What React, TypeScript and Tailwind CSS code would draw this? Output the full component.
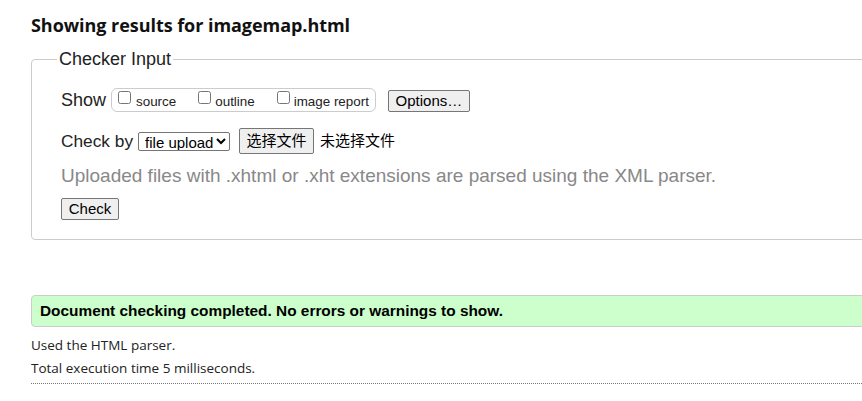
export default function App() {
  return (
    <div className="w-[862px] h-[401px] overflow-hidden bg-white text-[#222]">
      <div className="w-[900px] pl-[31px]">
        {/* heading */}
        <h2 className="mt-[13px] text-[18px] leading-[24px] font-bold text-[#111] font-['Open_Sans',sans-serif] tracking-[-0.05px]">
          Showing results for imagemap.html
        </h2>

        {/* checker form */}
        <fieldset className="mt-[12px] border border-[#cccccc] rounded-[4px] pl-[29px] pb-[18px] font-['Liberation_Sans',Arial,sans-serif]">
          <legend className="-ml-[4px] px-[2px] text-[18px] leading-[20px] text-[#222]">Checker Input</legend>

          <div className="mt-[19px] flex items-center h-[24px]">
            <span className="text-[18px] leading-[20px]">Show</span>
            <div className="ml-[5px] h-[24px] flex items-center border border-[#cccccc] rounded-[6px] pl-[6px] pr-[6px] text-[13.4px]">
              <label className="flex items-center gap-[5px]">
                <input type="checkbox" className="m-0 w-[13px] h-[13px] -translate-y-[2px]" />
                <span className="translate-y-[2px]">source</span>
              </label>
              <label className="ml-[22px] flex items-center gap-[4px]">
                <input type="checkbox" className="m-0 w-[13px] h-[13px] -translate-y-[2px]" />
                <span className="translate-y-[2px]">outline</span>
              </label>
              <label className="ml-[22px] flex items-center gap-[4px]">
                <input type="checkbox" className="m-0 w-[13px] h-[13px] -translate-y-[2px]" />
                <span className="translate-y-[2px]">image report</span>
              </label>
            </div>
            <button className="ml-[12px] mt-[2px] h-[22px] w-[82px] bg-[#efefef] border border-[#767676] rounded-[2px] text-[15px] leading-[18px] text-black">
              Options…
            </button>
          </div>

          <div className="mt-[16px] flex items-center h-[26px]">
            <span className="text-[17.3px] leading-[20px]">Check by</span>
            <select className="ml-[5px] h-[19px] w-[92px] bg-white border border-[#767676] rounded-[2px] text-[15px] leading-[17px] text-black pl-[2px]">
              <option>file upload</option>
            </select>
            <button className="ml-[9px] h-[26px] w-[75px] bg-[#efefef] border border-[#767676] rounded-[2px] text-[15px] text-black font-['Liberation_Sans','Noto_Sans_CJK_SC',sans-serif]">
              选择文件
            </button>
            <span className="ml-[6px] text-[15px] text-black font-['Liberation_Sans','Noto_Sans_CJK_SC',sans-serif]">未选择文件</span>
          </div>

          <p className="mt-[12px] text-[19px] leading-[20px] text-[#888888]">
            Uploaded files with .xhtml or .xht extensions are parsed using the XML parser.
          </p>

          <button className="mt-[12px] h-[22px] w-[58px] bg-[#efefef] border border-[#767676] rounded-[2px] text-[15px] leading-[18px] text-black">
            Check
          </button>
        </fieldset>

        {/* result */}
        <div className="mt-[55px] h-[32px] flex items-center bg-[#ccffcc] border border-[#cccccc] rounded-l-[4px] pl-[8px]">
          <p className="text-[15.4px] font-bold text-black font-['Liberation_Sans',Arial,sans-serif]">
            Document checking completed. No errors or warnings to show.
          </p>
        </div>

        <div className="mt-[7px] text-[13.5px] leading-[23px] text-[#222] font-['Open_Sans',sans-serif]">
          <p>Used the HTML parser.</p>
          <p>Total execution time 5 milliseconds.</p>
        </div>
        <div className="mt-[3px] border-t border-dotted border-[#777777]" />
      </div>
    </div>
  );
}
